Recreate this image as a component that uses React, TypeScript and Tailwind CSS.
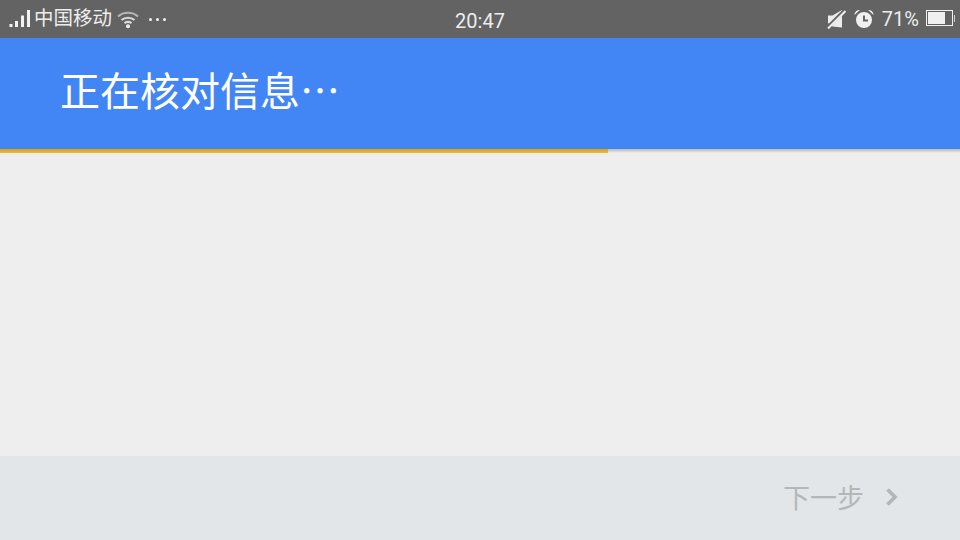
import React from "react";

const cjk = "font-['Noto_Sans_CJK_SC',sans-serif]";
const latin = "font-['Roboto','Noto_Sans_CJK_SC',sans-serif]";

function SignalIcon() {
  return (
    <svg width="22" height="20" viewBox="0 0 22 20" className="text-[#f2f2f2]">
      <rect x="0.5" y="15" width="3" height="3" fill="currentColor" />
      <rect x="6" y="12" width="3" height="6" fill="currentColor" />
      <rect x="12" y="6.5" width="3" height="11.5" fill="currentColor" />
      <rect x="18" y="1" width="3" height="17" fill="currentColor" />
    </svg>
  );
}

function WifiIcon() {
  return (
    <svg width="22" height="20" viewBox="0 0 22 20" fill="none" stroke="#d8d8d8">
      <path d="M1 7.5C6.5 2.5 15.5 2.5 21 7.5" strokeWidth="2" opacity="0.7" />
      <path d="M4.5 11C8 8 14 8 17.5 11" strokeWidth="2.2" />
      <path d="M7.5 14.2C9.5 12.8 12.5 12.8 14.5 14.2" strokeWidth="2.2" />
      <circle cx="11" cy="17.2" r="2" fill="#f2f2f2" stroke="none" />
    </svg>
  );
}

function MuteIcon() {
  return (
    <svg width="19" height="20" viewBox="0 0 19 20">
      <path d="M1 6.5H5.5L15 1V18.5L5.5 17.5L1 14Z" fill="#ececec" />
      <path d="M0 19L17 2" stroke="#636363" strokeWidth="3.6" />
      <path d="M1 19.5L18.5 2" stroke="#ececec" strokeWidth="2" />
    </svg>
  );
}

function AlarmIcon() {
  return (
    <svg width="20" height="20" viewBox="0 0 20 20">
      <circle cx="10" cy="11" r="8" fill="#f0f0f0" />
      <path d="M10 6.5V11.5H14" fill="none" stroke="#636363" strokeWidth="2" />
      <path d="M0.5 6C0.5 3 2.8 0.8 5.8 1Z" fill="#f0f0f0" />
      <path d="M19.5 6C19.5 3 17.2 0.8 14.2 1Z" fill="#f0f0f0" />
    </svg>
  );
}

function BatteryIcon() {
  return (
    <div className="mb-[2px] flex items-center">
      <div className="flex h-[16px] w-[27px] border border-[#f0f0f0] p-px">
        <div className="w-[17px] bg-[#f0f0f0]" />
      </div>
      <div className="ml-px h-[7px] w-px bg-[#cfcfcf]" />
    </div>
  );
}

function StatusBar() {
  return (
    <div className={`flex h-[38px] shrink-0 items-center justify-between bg-[#636363] pl-[9px] pr-[5px] text-[#ededed] ${latin}`}>
      <div className="flex w-[200px] items-center">
        <SignalIcon />
        <span className="ml-[3px] text-[19.5px] leading-none whitespace-nowrap">中国移动</span>
        <span className="ml-[5px]"><WifiIcon /></span>
        <span className="ml-[10px] flex gap-[4px]">
          <i className="size-[3px] rounded-full bg-[#f4f4f4]" />
          <i className="size-[3px] rounded-full bg-[#f4f4f4]" />
          <i className="size-[3px] rounded-full bg-[#f4f4f4]" />
        </span>
      </div>
      <span className="-ml-[4px] pt-[3px] text-[20px] leading-none">20:47</span>
      <div className="flex w-[200px] items-center justify-end">
        <MuteIcon />
        <span className="ml-[8px] mb-[1px]"><AlarmIcon /></span>
        <span className="ml-[8px] mb-[1px] text-[20px] leading-none whitespace-nowrap">71%</span>
        <span className="ml-[7px]"><BatteryIcon /></span>
      </div>
    </div>
  );
}

export default function App() {
  return (
    <div lang="zh-CN" className="flex h-[540px] w-[960px] flex-col overflow-hidden bg-[#eeeeee]">
      <StatusBar />
      <div className={`flex h-[111px] shrink-0 items-center bg-[#4285f4] pl-[60px] pb-[10px] text-[40px] leading-none text-white ${cjk}`}>
        正在核对信息…
      </div>
      <div className="h-[4px] shrink-0 bg-gradient-to-b from-[#bdbab1] to-[#eeeeee]">
        <div className="h-[4px] w-[608px] bg-gradient-to-b from-[#dfa000] to-[#edb93c]" />
      </div>
      <div className="flex-1" />
      <div className={`flex h-[84px] shrink-0 items-center justify-end bg-[#e2e6e9] pr-[61px] pb-[3px] text-[#b4b7b9] ${cjk}`}>
        <span className="text-[27px] leading-none">下一步</span>
        <svg width="14" height="20" viewBox="0 0 14 20" fill="none" className="ml-[21px]">
          <path d="M2.5 2.5L10 10L2.5 17.5" stroke="#b4b7b9" strokeWidth="3.8" />
        </svg>
      </div>
    </div>
  );
}
